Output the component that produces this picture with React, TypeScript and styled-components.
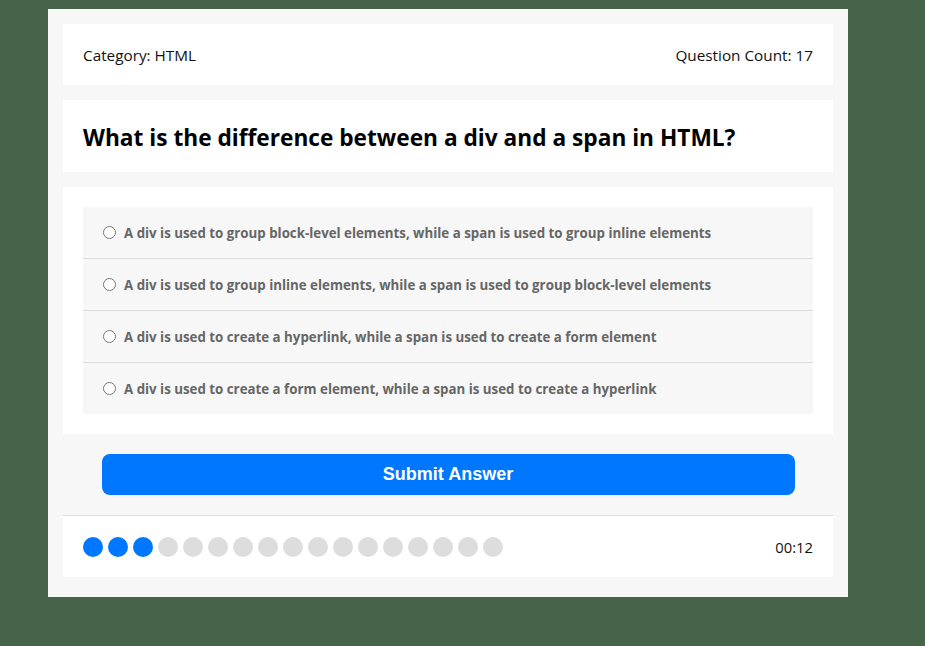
import React from "react";
import styled, { createGlobalStyle } from "styled-components";

const Global = createGlobalStyle`
  html, body { margin: 0; padding: 0; background: #466449; }
  body { font-family: "Open Sans", "Noto Sans", sans-serif; }
`;

const Page = styled.div`
  padding: 9px 0 0 48px;
  min-height: 646px;
  box-sizing: border-box;
`;

const Quiz = styled.div`
  width: 800px;
  box-sizing: border-box;
  background: #f7f7f7;
  padding: 15px 15px 20px;
  display: flex;
  flex-direction: column;
`;

const Card = styled.div`
  background: #fff;
  padding: 20px;
`;

const HeaderCard = styled(Card)`
  display: flex;
  justify-content: space-between;
  align-items: center;
  height: 61px;
  box-sizing: border-box;
  padding: 1px 20px 0;
  font-size: 15.3px;
  color: #111;
`;

const QuestionCard = styled(Card)`
  margin-top: 15px;
  height: 72px;
  box-sizing: border-box;
  padding: 2px 20px 0;
  display: flex;
  align-items: center;
`;

const Question = styled.h2`
  margin: 0;
  font-size: 22.7px;
  font-weight: 700;
  color: #000;
`;

const OptionsCard = styled(Card)`
  margin-top: 15px;
`;

const OptionList = styled.ul`
  list-style: none;
  margin: 0;
  padding: 0;
  background: #f7f7f7;
`;

const Option = styled.li`
  height: 52px;
  box-sizing: border-box;
  display: flex;
  align-items: center;
  gap: 8px;
  padding: 1px 20px 0;
  border-top: 1px solid #dddddd;
  &:first-child { border-top: none; height: 51px; }
`;

const Radio = styled.span`
  width: 13px;
  height: 13px;
  box-sizing: border-box;
  border: 1px solid #767676;
  border-radius: 50%;
  background: #fff;
  flex: none;
  margin-top: -1px;
`;

const OptionText = styled.span`
  font-size: 13.3px;
  font-weight: 700;
  color: #666;
`;

const Submit = styled.button`
  display: block;
  width: 90%;
  height: 41px;
  margin: 20px auto;
  border: none;
  border-radius: 8px;
  background: #0077ff;
  color: #fff;
  font-family: "Liberation Sans", Arial, sans-serif;
  font-weight: 700;
  font-size: 18px;
  cursor: pointer;
`;

const Footer = styled(Card)`
  border-top: 1px solid #dddddd;
  height: 62px;
  box-sizing: border-box;
  padding: 0 20px;
  display: flex;
  align-items: center;
  justify-content: space-between;
`;

const Dots = styled.div`
  display: flex;
  gap: 5px;
`;

const Dot = styled.span<{ $done: boolean }>`
  width: 20px;
  height: 20px;
  border-radius: 50%;
  background: ${(p) => (p.$done ? "#0077ff" : "#dddddd")};
`;

const Timer = styled.span`
  font-size: 14.8px;
  color: #111;
  padding-top: 1px;
`;

const options = [
  "A div is used to group block-level elements, while a span is used to group inline elements",
  "A div is used to group inline elements, while a span is used to group block-level elements",
  "A div is used to create a hyperlink, while a span is used to create a form element",
  "A div is used to create a form element, while a span is used to create a hyperlink",
];

export default function App() {
  return (
    <>
      <Global />
      <Page>
        <Quiz>
          <HeaderCard>
            <span>Category: HTML</span>
            <span>Question Count: 17</span>
          </HeaderCard>
          <QuestionCard>
            <Question>What is the difference between a div and a span in HTML?</Question>
          </QuestionCard>
          <OptionsCard>
            <OptionList>
              {options.map((o) => (
                <Option key={o}>
                  <Radio />
                  <OptionText>{o}</OptionText>
                </Option>
              ))}
            </OptionList>
          </OptionsCard>
          <Submit>Submit Answer</Submit>
          <Footer>
            <Dots>
              {Array.from({ length: 17 }).map((_, i) => (
                <Dot key={i} $done={i < 3} />
              ))}
            </Dots>
            <Timer>00:12</Timer>
          </Footer>
        </Quiz>
      </Page>
    </>
  );
}
